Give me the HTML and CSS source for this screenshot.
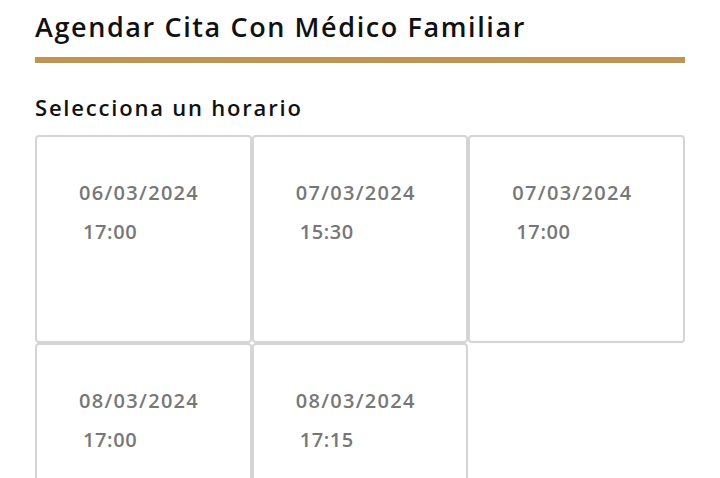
FILE: index.html
```html
<!DOCTYPE html>
<html lang="es">
<head>
<meta charset="utf-8">
<title>Agendar Cita</title>
<link rel="stylesheet" href="styles.css">
</head>
<body>
<main class="page">
  <h1 class="title">Agendar Cita Con Médico Familiar</h1>
  <h2 class="subtitle">Selecciona un horario</h2>
  <div class="slots">
    <div class="slot"><span class="date">06/03/2024</span><span class="time">17:00</span></div>
    <div class="slot"><span class="date">07/03/2024</span><span class="time">15:30</span></div>
    <div class="slot"><span class="date">07/03/2024</span><span class="time">17:00</span></div>
    <div class="slot"><span class="date">08/03/2024</span><span class="time">17:00</span></div>
    <div class="slot"><span class="date">08/03/2024</span><span class="time">17:15</span></div>
  </div>
</main>
</body>
</html>
```
FILE: styles.css
```css
html, body {
  margin: 0;
  padding: 0;
  background: #ffffff;
}
body {
  font-family: "Open Sans", "Liberation Sans", sans-serif;
}
.page {
  width: 650px;
  margin-left: 35px;
}
.title {
  margin: 9px 0 0 0;
  padding-bottom: 12px;
  border-bottom: 6px solid #bf9554;
  font-size: 27px;
  line-height: 36px;
  font-weight: 600;
  letter-spacing: 1.6px;
  color: #111111;
  white-space: nowrap;
}
.subtitle {
  margin: 30px 0 13px 0;
  font-size: 22px;
  line-height: 29px;
  font-weight: 600;
  letter-spacing: 1.8px;
  color: #111111;
}
.slots {
  display: grid;
  grid-template-columns: repeat(3, 1fr);
}
.slot {
  height: 208px;
  box-sizing: border-box;
  border: 2px solid #d5d5d5;
  border-radius: 4px;
  padding: 44px 0 0 42px;
  display: flex;
  flex-direction: column;
  gap: 15px;
}
.date, .time {
  font-size: 20px;
  line-height: 24px;
  font-weight: 600;
  color: #777777;
  letter-spacing: 1.3px;
}
.time {
  margin-left: 4px;
  letter-spacing: 0.6px;
}
```
